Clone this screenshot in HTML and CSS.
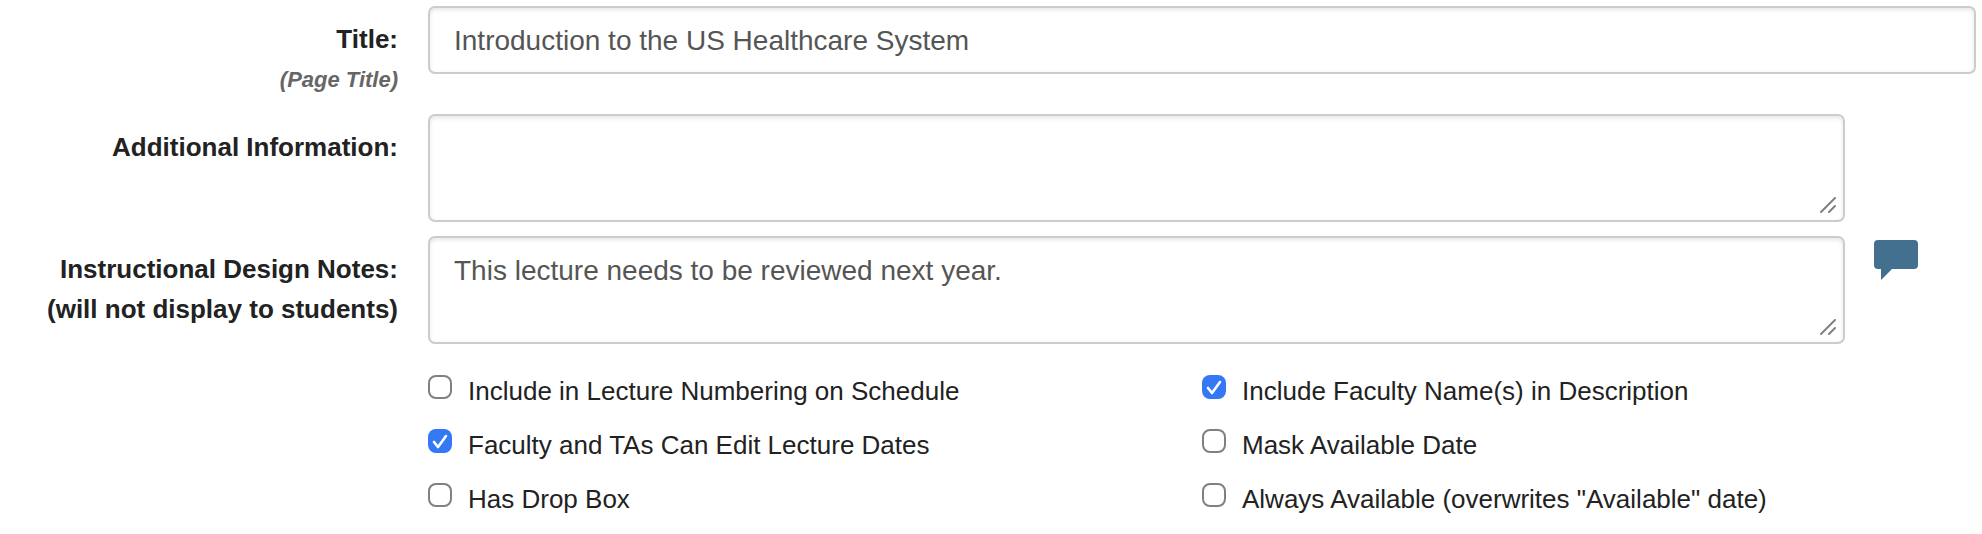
FILE: index.html
```html
<!DOCTYPE html>
<html lang="en">
<head>
<meta charset="utf-8">
<meta name="viewport" content="width=device-width, initial-scale=1">
<title>Edit Lecture</title>
<link rel="stylesheet" href="styles.css">
</head>
<body>
<form class="lecture-form">
  <div class="field">
    <label class="field-label" for="title">Title:<span class="hint">(Page Title)</span></label>
    <input class="control" id="title" type="text" value="Introduction to the US Healthcare System">
  </div>

  <div class="field">
    <label class="field-label" for="info">Additional Information:</label>
    <div class="with-aside">
      <div class="area">
        <textarea class="control" id="info"></textarea>
        <svg class="grip" viewBox="0 0 16 16" aria-hidden="true"><path d="M1 15 15 1M9 15l6-6"/></svg>
      </div>
    </div>
  </div>

  <div class="field">
    <label class="field-label" for="notes">Instructional Design Notes:<br>(will not display to students)</label>
    <div class="with-aside">
      <div class="area">
        <textarea class="control" id="notes">This lecture needs to be reviewed next year.</textarea>
        <svg class="grip" viewBox="0 0 16 16" aria-hidden="true"><path d="M1 15 15 1M9 15l6-6"/></svg>
      </div>
      <button class="comment" type="button" aria-label="Comment">
        <svg viewBox="0 0 44 40" aria-hidden="true"><path d="M4 0H40Q44 0 44 4V25Q44 29 40 29H18L7 40V29H4Q0 29 0 25V4Q0 0 4 0Z"/></svg>
      </button>
    </div>
  </div>

  <div class="field">
    <div class="options">
      <label class="option"><input type="checkbox">Include in Lecture Numbering on Schedule</label>
      <label class="option"><input type="checkbox" checked>Include Faculty Name(s) in Description</label>
      <label class="option"><input type="checkbox" checked>Faculty and TAs Can Edit Lecture Dates</label>
      <label class="option"><input type="checkbox">Mask Available Date</label>
      <label class="option"><input type="checkbox">Has Drop Box</label>
      <label class="option"><input type="checkbox">Always Available (overwrites "Available" date)</label>
    </div>
  </div>
</form>
</body>
</html>
```
FILE: styles.css
```css
* {
  box-sizing: border-box;
}

body {
  margin: 0;
  background: #fff;
  color: #222;
  font: 26px/40px "Liberation Sans", Arial, Helvetica, sans-serif;
}

.lecture-form {
  padding: 6px;
}

.field {
  display: grid;
  grid-template-columns: 20% minmax(0, 1fr);
  column-gap: 28px;
  align-items: start;
  margin-bottom: 14px;
}

.field-label {
  padding: 13px 2px 0 0;
  font-weight: bold;
  text-align: right;
}

.hint {
  display: block;
  color: #666;
  font-size: 22px;
  font-style: italic;
  line-height: 41px;
}

.control {
  display: block;
  width: 100%;
  margin: 0;
  padding: 15px 24px 13px;
  border: 2px solid #ccc;
  border-radius: 7px;
  background: #fff;
  box-shadow: inset 0 2px 4px rgba(0, 0, 0, 0.1);
  color: #555;
  font: 28px/36px "Liberation Sans", Arial, Helvetica, sans-serif;
}

textarea.control {
  height: 108px;
  resize: none;
}

.with-aside {
  display: grid;
  grid-template-columns: minmax(0, 1fr) 102px;
  column-gap: 29px;
  align-items: start;
}

.area {
  position: relative;
}

.grip {
  position: absolute;
  right: 9px;
  bottom: 9px;
  width: 16px;
  height: 16px;
  fill: none;
  stroke: #808080;
  stroke-width: 2;
  stroke-linecap: round;
}

.comment {
  width: 44px;
  margin: 4px 0 0;
  padding: 0;
  border: 0;
  background: none;
  cursor: pointer;
}

.comment svg {
  display: block;
  width: 44px;
  height: 40px;
  fill: #43708f;
}

.options {
  display: grid;
  grid-column: 2;
  grid-template-columns: 1fr 1fr;
  row-gap: 14px;
  padding-top: 13px;
}

.option {
  display: flex;
  align-items: flex-start;
  gap: 16px;
}

.option input {
  appearance: none;
  flex: none;
  width: 24px;
  height: 24px;
  margin: 4px 0 0;
  border: 2px solid #808080;
  border-radius: 8px;
  background: #fff;
}

.option input:checked {
  border: 0;
  background: #3478f6 url("data:image/svg+xml,%3Csvg xmlns='http://www.w3.org/2000/svg' viewBox='0 0 24 24'%3E%3Cpath d='M6 13l4 5 8-11' fill='none' stroke='white' stroke-width='2.6' stroke-linecap='round' stroke-linejoin='round'/%3E%3C/svg%3E") center / 24px 24px no-repeat;
}
```
